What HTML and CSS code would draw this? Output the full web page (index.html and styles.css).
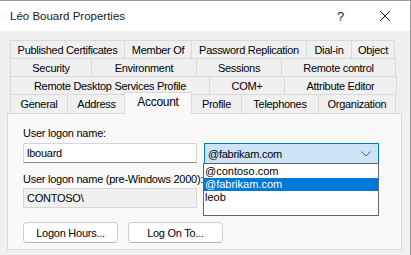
FILE: index.html
```html
<!DOCTYPE html>
<html>
<head>
<meta charset="utf-8">
<link rel="stylesheet" href="styles.css">
</head>
<body>
<div class="window">
  <div class="titlebar">
    <span class="title">Léo Bouard Properties</span>
    <span class="help">?</span>
    <svg class="close" width="12" height="12" viewBox="0 0 12 12"><path d="M1 1 L11 11 M11 1 L1 11" stroke="#1a1a1a" stroke-width="1" fill="none"/></svg>
  </div>
  <div class="dialog">
    <div class="tabs">
      <div class="tabrow">
        <div class="tab" style="width:115px">Published Certificates</div>
        <div class="tab" style="width:68px">Member Of</div>
        <div class="tab" style="width:116px">Password Replication</div>
        <div class="tab" style="width:46px">Dial-in</div>
        <div class="tab" style="width:44px">Object</div>
      </div>
      <div class="tabrow">
        <div class="tab" style="width:82px">Security</div>
        <div class="tab" style="width:106px">Environment</div>
        <div class="tab" style="width:86px">Sessions</div>
        <div class="tab" style="width:115px">Remote control</div>
      </div>
      <div class="tabrow">
        <div class="tab" style="width:200px">Remote Desktop Services Profile</div>
        <div class="tab" style="width:76px">COM+</div>
        <div class="tab" style="width:113px">Attribute Editor</div>
      </div>
      <div class="tabrow front">
        <div class="tab" style="width:58px">General</div>
        <div class="tab" style="width:59px">Address</div>
        <div class="tab active" style="width:66px">Account</div>
        <div class="tab" style="width:51px">Profile</div>
        <div class="tab" style="width:78px">Telephones</div>
        <div class="tab" style="width:78px">Organization</div>
      </div>
    </div>
    <div class="panel">
      <div class="form">
        <div class="label">User logon name:</div>
        <div class="label"></div>
        <div class="input">lbouard</div>
        <div class="combo">
          <span>@fabrikam.com</span>
          <svg class="chev" width="10" height="6" viewBox="0 0 10 6"><path d="M0.5 0.5 L5 5 L9.5 0.5" stroke="#5a5a5a" stroke-width="1" fill="none"/></svg>
        </div>
        <div class="label wide">User logon name (pre-Windows 2000):</div>
        <div class="input disabled">CONTOSO\</div>
        <div class="input"></div>
      </div>
      <div class="buttons">
        <div class="btn">Logon Hours...</div>
        <div class="btn">Log On To...</div>
      </div>
      <div class="dropdown">
        <div class="item">@contoso.com</div>
        <div class="item sel">@fabrikam.com</div>
        <div class="item">leob</div>
      </div>
    </div>
  </div>
</div>
</body>
</html>
```
FILE: styles.css
```css
* { box-sizing: border-box; }
html, body { margin: 0; padding: 0; }
body {
  width: 411px;
  height: 255px;
  overflow: hidden;
  background: #f0f0f0;
  font-family: "Liberation Sans", Arial, sans-serif;
  color: #000;
}
.window {
  width: 411px;
  height: 255px;
  border-top: 1px solid #9a9a9a;
  border-right: 1px solid #9a9a9a;
  display: flex;
  flex-direction: column;
}
.titlebar {
  height: 30px;
  background: #fff;
  display: flex;
  align-items: center;
  padding-left: 10px;
  font-size: 11.5px;
  color: #1a1a1a;
}
.title { flex: 1; }
.help { width: 12px; margin-right: 33px; font-size: 13px; padding-left: 3px; }
.close { margin-right: 19px; }
.dialog {
  flex: 1;
  background: #f0f0f0;
  padding: 9px 0 0 7px;
  position: relative;
}
.tabs {
  display: flex;
  flex-direction: column;
  padding-left: 3px;
  font-size: 11px;
  letter-spacing: -0.3px;
}
.tabrow {
  display: flex;
  height: 18px;
}
.tab {
  height: 18px;
  border: 1px solid #d9d9d9;
  border-bottom: none;
  margin-right: -1px;
  background: #f0f0f0;
  display: flex;
  align-items: center;
  justify-content: center;
  color: #000;
}
.tabrow.front { height: 19px; position: relative; z-index: 2; }
.tabrow.front .tab { height: 19px; }
.tab.active {
  background: #f9f9f9;
  height: 22px !important;
  margin-top: -2px;
  margin-left: -1px;
  margin-right: -1px;
  width: 68px !important;
  align-items: flex-start;
  padding-top: 2px;
  position: relative;
  z-index: 3;
  font-size: 12px;
}
.panel {
  position: relative;
  margin-top: 0;
  width: 395px;
  height: 137px;
  background: #f9f9f9;
  border: 1px solid #d9d9d9;
  padding: 11px 0 0 15px;
  font-size: 11px;
  letter-spacing: -0.25px;
  z-index: 1;
}
.form {
  display: grid;
  grid-template-columns: 174px 175px;
  column-gap: 7px;
  grid-template-rows: 18px 21px 24px 21px;
}
.label { line-height: 16px; }
.label.wide { grid-column: 1 / 3; align-self: end; line-height: 18px; }
.input {
  height: 20px;
  background: #fff;
  border: 1px solid #d5d5d5;
  border-bottom-color: #8a8a8a;
  padding-left: 3px;
  line-height: 18px;
  font-size: 11px;
}
.input.disabled { background: #f0f0f0; border-color: #d5d5d5; }
.combo {
  height: 21px;
  background: #cce4f7;
  border: 1px solid #0078d4;
  padding: 0 7px 0 3px;
  display: flex;
  align-items: center;
  justify-content: space-between;
  font-size: 11px;
}
.buttons {
  display: flex;
  gap: 10px;
  margin-top: 13px;
}
.btn {
  width: 95px;
  height: 21px;
  background: #fff;
  border: 1px solid #d0d0d0;
  border-bottom-color: #b8b8b8;
  border-radius: 4px;
  display: flex;
  align-items: center;
  justify-content: center;
}
.dropdown {
  position: absolute;
  left: 195px;
  top: 49px;
  width: 176px;
  height: 53px;
  background: #fff;
  border: 1px solid #646464;
  padding-top: 1px;
  z-index: 5;
  letter-spacing: 0;
}
.item {
  height: 13px;
  line-height: 13px;
  padding-left: 1px;
  font-size: 11px;
}
.item.sel { background: #0078d7; color: #fff; }
```
